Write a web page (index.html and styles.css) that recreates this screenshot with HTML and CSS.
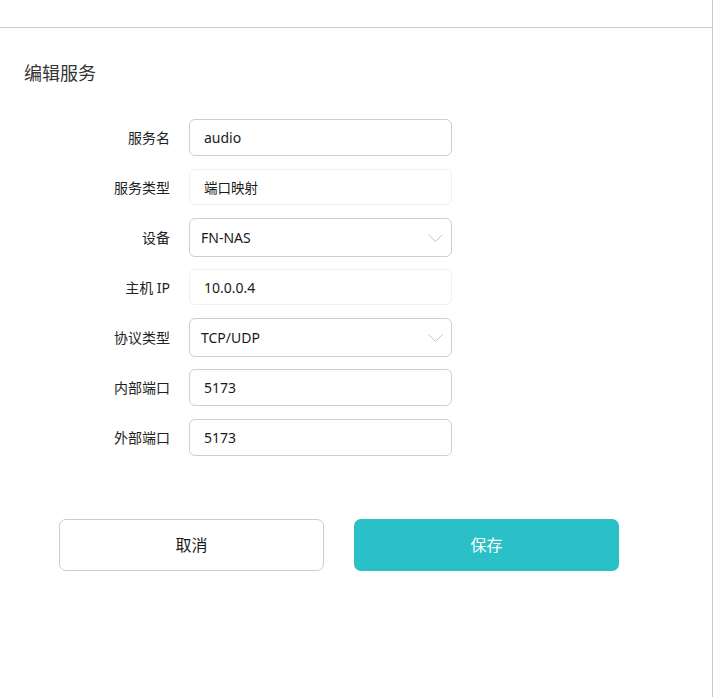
FILE: index.html
```html
<!DOCTYPE html>
<html lang="zh">
<head>
<meta charset="utf-8">
<title>编辑服务</title>
<link rel="stylesheet" href="styles.css">
</head>
<body>
<div class="panel">
  <div class="topbar"></div>
  <h1 class="title">编辑服务</h1>
  <form class="form">
    <div class="row">
      <label class="label">服务名</label>
      <div class="field">audio</div>
    </div>
    <div class="row">
      <label class="label">服务类型</label>
      <div class="field disabled small">端口映射</div>
    </div>
    <div class="row">
      <label class="label">设备</label>
      <div class="field select">FN-NAS
        <svg class="chev" width="15" height="8" viewBox="0 0 15 8"><polyline points="0.5,0.5 7.5,7.5 14.5,0.5" fill="none" stroke="#c4c4c4" stroke-width="1"/></svg>
      </div>
    </div>
    <div class="row">
      <label class="label">主机 IP</label>
      <div class="field disabled">10.0.0.4</div>
    </div>
    <div class="row">
      <label class="label">协议类型</label>
      <div class="field select">TCP/UDP
        <svg class="chev" width="15" height="8" viewBox="0 0 15 8"><polyline points="0.5,0.5 7.5,7.5 14.5,0.5" fill="none" stroke="#c4c4c4" stroke-width="1"/></svg>
      </div>
    </div>
    <div class="row">
      <label class="label">内部端口</label>
      <div class="field">5173</div>
    </div>
    <div class="row">
      <label class="label">外部端口</label>
      <div class="field">5173</div>
    </div>
  </form>
  <div class="actions">
    <button class="btn cancel" type="button">取消</button>
    <button class="btn save" type="button">保存</button>
  </div>
</div>
</body>
</html>
```
FILE: styles.css
```css
html, body {
  margin: 0;
  padding: 0;
  background: #ffffff;
}
body {
  font-family: "Noto Sans", "Noto Sans CJK SC", sans-serif;
  color: #333;
}
.panel {
  width: 712px;
  height: 697px;
  border-right: 1px solid #c8c8c8;
  box-sizing: content-box;
}
.topbar {
  height: 27px;
  border-bottom: 1px solid #cccccc;
}
.title {
  margin: 0;
  padding: 32px 0 0 24px;
  font-size: 18px;
  font-weight: 400;
  line-height: 26px;
  color: #333;
}
.form {
  margin-top: 26px;
  display: flex;
  flex-direction: column;
}
.row {
  height: 50px;
  display: flex;
  align-items: center;
  gap: 19px;
}
.label {
  width: 170px;
  text-align: right;
  font-size: 14px;
  color: #222;
}
.field {
  width: 263px;
  height: 37px;
  box-sizing: border-box;
  border: 1px solid #cfcfcf;
  border-radius: 6px;
  padding: 0 14px;
  display: flex;
  align-items: center;
  font-size: 14px;
  color: #1a1a1a;
}
.field.disabled {
  border-color: #f0f0f0;
  height: 36px;
}
.field.small {
  font-size: 13.5px;
}
.field.select {
  height: 39px;
  padding: 0 8px 0 11px;
  justify-content: space-between;
}
.chev {
  display: block;
  margin-top: 1px;
}
.actions {
  margin-top: 57px;
  padding-left: 59px;
  display: flex;
  gap: 30px;
}
.btn {
  width: 265px;
  height: 52px;
  border-radius: 7px;
  font-family: "Noto Sans", "Noto Sans CJK SC", sans-serif;
  font-size: 16px;
  cursor: pointer;
  padding: 0 0 2px;
}
.cancel {
  background: #ffffff;
  border: 1px solid #cccccc;
  color: #1a1a1a;
}
.save {
  background: #29c0c7;
  border: none;
  color: #ffffff;
}
```
